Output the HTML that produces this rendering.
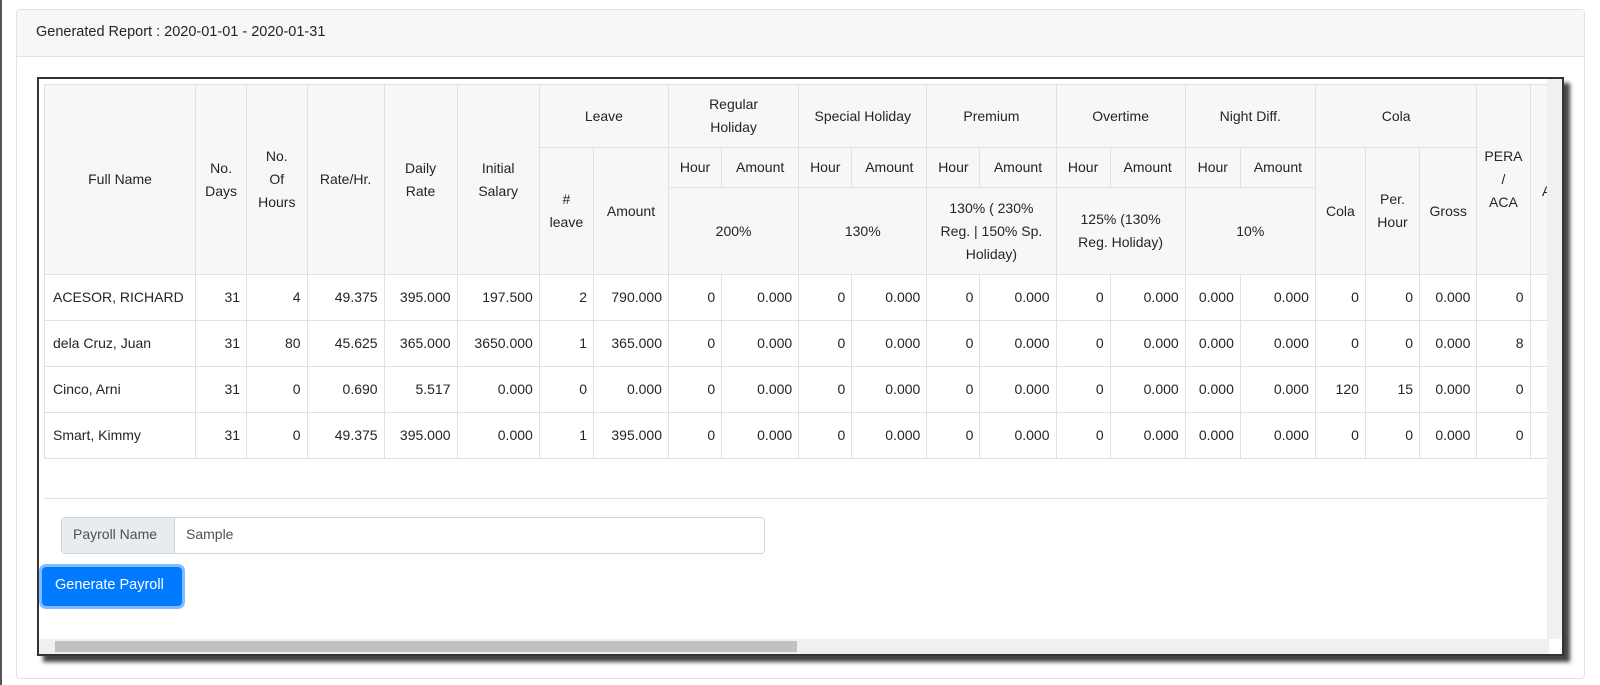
<!DOCTYPE html>
<html><head><meta charset="utf-8"><style>
*{box-sizing:border-box;margin:0;padding:0}
body{width:1600px;height:685px;background:#fff;font-family:"Liberation Sans",sans-serif;font-size:14px;color:#212529;position:relative;overflow:hidden}
.lb{position:absolute;left:0;top:0;width:2px;height:685px;background:#555}
.card{position:absolute;left:16px;top:9px;width:1569px;height:670px;border:1px solid #e2e2e2;border-radius:4px}
.ch{height:47px;background:#f7f7f7;border-bottom:1px solid #e2e2e2;padding:14px 19px;font-size:14.5px}
.frame{position:absolute;left:37px;top:77px;width:1527px;height:579px;border:2px solid #333;box-shadow:6px 6px 4px #444;background:#fff;overflow:hidden}
.clip{position:absolute;left:5px;top:5px;width:1503px;height:557px;overflow:hidden}
table{border-collapse:collapse;table-layout:fixed;width:1620px;line-height:23px}
th,td{border:1px solid #dee2e6;padding:0 6px}
th{background:#f7f7f7;font-weight:normal;text-align:center;vertical-align:middle}
td{text-align:right;height:46px}
td.l{text-align:left;padding-left:8px}
.r1 th{height:63px}.r2 th{height:40px}.r3 th{height:87px}
.empty{height:40px;border-bottom:1px solid #dee2e6;width:1503px}
.inp{display:inline-block;width:22px;height:30px;border:1px solid #bbb;border-right:none;text-align:left;padding:4px 2px;line-height:20px}
.vs{position:absolute;left:1508px;top:0;width:15px;height:560px;background:#f0f0f0}
.hs{position:absolute;left:0;top:560px;width:1510px;height:15px;background:#f0f0f0}
.hs div{position:absolute;left:16px;top:2px;width:742px;height:11px;background:#c1c1c1}
.grp{position:absolute;left:22px;top:438px;width:704px;height:37px;border:1px solid #ced4da;border-radius:4px;display:flex}
.grp .a{width:113px;background:#e9ecef;border-right:1px solid #ced4da;color:#495057;padding:8px 11px}
.grp .b{padding:8px 11px;color:#495057}
.btn{position:absolute;left:3px;top:488px;width:140px;height:39px;background:#007bff;color:#fff;border-radius:4px;box-shadow:0 0 0 3px #80bdff;padding:10px 13px;font-size:14.5px}
</style></head><body>
<div class="lb"></div>
<div class="card"><div class="ch">Generated Report : 2020-01-01 - 2020-01-31</div></div>
<div class="frame">
<div class="clip">
<table>
<colgroup><col style="width:145px"><col style="width:49px"><col style="width:58px"><col style="width:74px"><col style="width:70px"><col style="width:79px"><col style="width:52px"><col style="width:72px"><col style="width:51px"><col style="width:74px"><col style="width:51px"><col style="width:72px"><col style="width:51px"><col style="width:73px"><col style="width:52px"><col style="width:72px"><col style="width:53px"><col style="width:72px"><col style="width:48px"><col style="width:52px"><col style="width:55px"><col style="width:51px"><col style="width:58px"><col style="width:70px"></colgroup>
<tr class="r1"><th rowspan="3">Full Name</th><th rowspan="3">No.<br>Days</th><th rowspan="3">No.<br>Of<br>Hours</th><th rowspan="3">Rate/Hr.</th><th rowspan="3">Daily<br>Rate</th><th rowspan="3">Initial<br>Salary</th><th colspan="2">Leave</th><th colspan="2">Regular<br>Holiday</th><th colspan="2">Special Holiday</th><th colspan="2">Premium</th><th colspan="2">Overtime</th><th colspan="2">Night Diff.</th><th colspan="3">Cola</th><th rowspan="3">PERA<br>/<br>ACA</th><th rowspan="3">Rice<br>Allow.</th><th rowspan="3" style="text-align:left">A</th></tr>
<tr class="r2"><th rowspan="2">#<br>leave</th><th rowspan="2">Amount</th><th>Hour</th><th>Amount</th><th>Hour</th><th>Amount</th><th>Hour</th><th>Amount</th><th>Hour</th><th>Amount</th><th>Hour</th><th>Amount</th><th rowspan="2">Cola</th><th rowspan="2">Per.<br>Hour</th><th rowspan="2">Gross</th></tr>
<tr class="r3"><th colspan="2">200%</th><th colspan="2">130%</th><th colspan="2">130% ( 230%<br>Reg. | 150% Sp.<br>Holiday)</th><th colspan="2">125% (130%<br>Reg. Holiday)</th><th colspan="2">10%</th></tr>
<tr><td class="l">ACESOR, RICHARD</td><td>31</td><td>4</td><td>49.375</td><td>395.000</td><td>197.500</td><td>2</td><td>790.000</td><td>0</td><td>0.000</td><td>0</td><td>0.000</td><td>0</td><td>0.000</td><td>0</td><td>0.000</td><td>0.000</td><td>0.000</td><td>0</td><td>0</td><td>0.000</td><td>0</td><td>0</td><td class="l"><span class="inp">0</span></td></tr>
<tr><td class="l">dela Cruz, Juan</td><td>31</td><td>80</td><td>45.625</td><td>365.000</td><td>3650.000</td><td>1</td><td>365.000</td><td>0</td><td>0.000</td><td>0</td><td>0.000</td><td>0</td><td>0.000</td><td>0</td><td>0.000</td><td>0.000</td><td>0.000</td><td>0</td><td>0</td><td>0.000</td><td>8</td><td>0</td><td class="l"><span class="inp">0</span></td></tr>
<tr><td class="l">Cinco, Arni</td><td>31</td><td>0</td><td>0.690</td><td>5.517</td><td>0.000</td><td>0</td><td>0.000</td><td>0</td><td>0.000</td><td>0</td><td>0.000</td><td>0</td><td>0.000</td><td>0</td><td>0.000</td><td>0.000</td><td>0.000</td><td>120</td><td>15</td><td>0.000</td><td>0</td><td>0</td><td class="l"><span class="inp">1</span></td></tr>
<tr><td class="l">Smart, Kimmy</td><td>31</td><td>0</td><td>49.375</td><td>395.000</td><td>0.000</td><td>1</td><td>395.000</td><td>0</td><td>0.000</td><td>0</td><td>0.000</td><td>0</td><td>0.000</td><td>0</td><td>0.000</td><td>0.000</td><td>0.000</td><td>0</td><td>0</td><td>0.000</td><td>0</td><td>0</td><td class="l"><span class="inp">0</span></td></tr>
</table>
<div class="empty"></div>
</div>
<div class="grp"><div class="a">Payroll Name</div><div class="b">Sample</div></div>
<div class="btn">Generate Payroll</div>
<div class="vs"></div>
<div class="hs"><div></div></div>
</div>
</body></html>
